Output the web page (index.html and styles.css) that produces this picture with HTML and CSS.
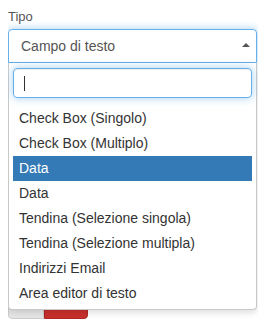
FILE: index.html
```html
<!DOCTYPE html>
<html lang="it">
<head>
    <meta charset="UTF-8">
    <meta name="viewport" content="width=device-width, initial-scale=1.0">
    <title>Tipo campo</title>
    <link rel="stylesheet" href="styles.css">
</head>
<body>

    <div class="field">
        <label class="field-label">Tipo</label>

        <div class="select-box">
            <span class="select-value">Campo di testo</span>
            <span class="select-arrow"></span>
        </div>

        <div class="dropdown">
            <div class="search">
                <div class="search-input"><span class="caret"></span></div>
            </div>
            <ul class="options">
                <li>Check Box (Singolo)</li>
                <li>Check Box (Multiplo)</li>
                <li class="active">Data</li>
                <li>Data</li>
                <li>Tendina (Selezione singola)</li>
                <li>Tendina (Selezione multipla)</li>
                <li>Indirizzi Email</li>
                <li>Area editor di testo</li>
            </ul>
        </div>
    </div>

    <div class="actions">
        <button class="btn btn-default"></button>
        <button class="btn btn-danger"></button>
    </div>

</body>
</html>
```

FILE: styles.css
```css
body {
    font-family: 'Liberation Sans', Arial, sans-serif;
    margin: 8px;
    color: #333;
    background: #fff;
}


.field {
    position: relative;
    width: 249px;
}

.field-label {
    display: block;
    font-size: 13px;
    line-height: 18px;
    color: #555;
    margin-bottom: 3px;
}


.select-box {
    box-sizing: border-box;
    height: 34px;
    display: flex;
    align-items: center;
    justify-content: space-between;
    padding: 0 6px 0 12px;
    border: 1px solid #66afe9;
    border-radius: 4px 4px 0 0;
    box-shadow: 0 0 8px rgba(102, 175, 233, 0.6);
    font-size: 14px;
    color: #555;
}

.select-arrow {
    width: 0;
    height: 0;
    border-left: 4px solid transparent;
    border-right: 4px solid transparent;
    border-bottom: 4px solid #555;
    margin-bottom: 2px;
}


.dropdown {
    position: absolute;
    top: 100%;
    left: 0;
    right: 0;
    z-index: 10;
    background: #fff;
    border: 1px solid #c8c8c8;
    border-top: none;
    border-radius: 0 0 4px 4px;
    box-shadow: 0 3px 6px rgba(0, 0, 0, 0.12);
}

.search {
    padding: 5px 4px 4px 4px;
}

.search-input {
    box-sizing: border-box;
    height: 30px;
    display: flex;
    align-items: center;
    padding-left: 10px;
    border: 1px solid #66afe9;
    border-radius: 4px;
    box-shadow: inset 0 1px 1px rgba(0, 0, 0, 0.075), 0 0 8px rgba(102, 175, 233, 0.6);
}

.caret {
    width: 1px;
    height: 15px;
    background: #333;
}

.options {
    list-style: none;
    margin: 0;
    padding: 4px 4px 3px 4px;
    font-size: 14px;
}

.options li {
    height: 25px;
    line-height: 25px;
    padding: 0 6px;
    color: #333;
    white-space: nowrap;
}

.options li.active {
    background-color: #337ab7;
    color: #fff;
}


.actions {
    display: flex;
    margin-top: 222px;
}

.btn {
    height: 34px;
    border: 1px solid #ccc;
    padding: 0;
}

.btn-default {
    width: 36px;
    background: #e6e6e6;
    border-radius: 4px 0 0 4px;
}

.btn-danger {
    width: 44px;
    background: #c9302c;
    border-color: #ac2925;
    border-radius: 0 4px 4px 0;
}
```
